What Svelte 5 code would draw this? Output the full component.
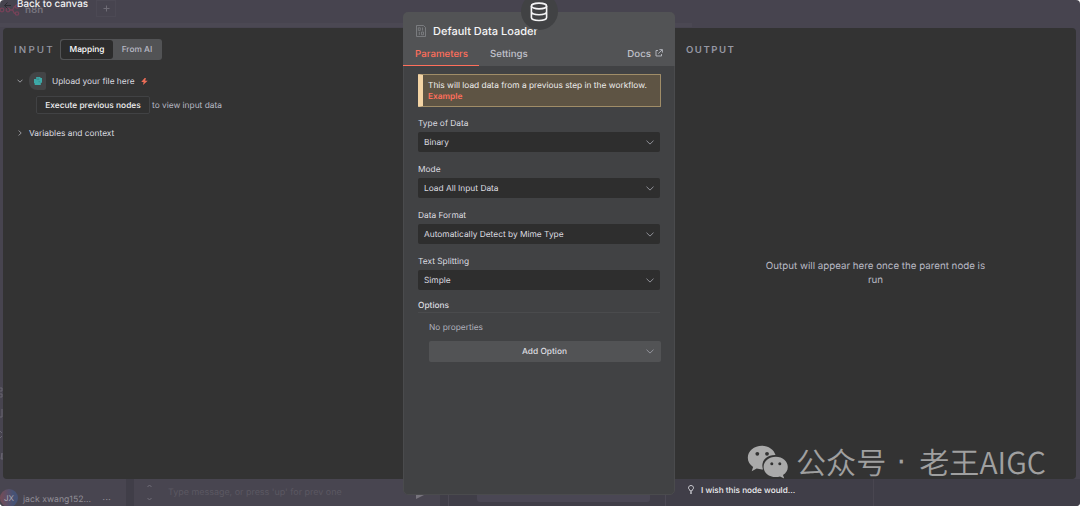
<script>
  const fields = [
    { label: 'Type of Data', value: 'Binary' },
    { label: 'Mode', value: 'Load All Input Data' },
    { label: 'Data Format', value: 'Automatically Detect by Mime Type' },
    { label: 'Text Splitting', value: 'Simple' }
  ];
</script>

{#snippet chevron()}
  <svg class="chevron" viewBox="0 0 8 5" width="8" height="5"><path d="M.5.7 4 4.1 7.500.7" /></svg>
{/snippet}

<div class="screen">
  <div class="app">
    <header class="topbar">
      <div class="brand">
        <svg class="logo" width="20" height="12" viewBox="0 0 20 12"><g fill="none" stroke="#754258" stroke-width="1.3"><circle cx="2" cy="6" r="1.8" /><circle cx="8" cy="6" r="1.8" /><path d="M10 6h2c2 0 1-3.500 3.200-3.500M12 6c2 0 1 3.500 3.200 3.500" /><circle cx="17" cy="2.500" r="1.700" /><circle cx="17" cy="9.500" r="1.700" /></g></svg>
        <span>n8n</span>
      </div>
      <span class="plus"><svg width="7" height="7" viewBox="0 0 7 7"><path d="M3.500.5v6M.5 3.500h6" stroke="#6f6c76" fill="none" /></svg></span>
    </header>
    <footer class="bottombar">
      <div class="user">
        <span class="avatar">JX</span><span class="username">jack xwang152...</span><span class="dots">···</span>
      </div>
      <div class="chat">
        <div class="steps">
          <svg width="5" height="4" viewBox="0 0 5 4"><path d="M.5 3 2.500 1l2 2" /></svg>
          <svg width="5" height="4" viewBox="0 0 5 4"><path d="M.5 1l2 2 2-2" /></svg>
        </div>
        <span class="prompt">Type message, or press 'up' for prev one</span>
        <svg class="send" width="8" height="6" viewBox="0 0 8 6"><path d="M0 1h8L0 5z" fill="#77747d" /></svg>
      </div>
      <div class="log"><div class="logbox"></div></div>
      <div class="rest"></div>
    </footer>
  </div>

  <svg class="rail" width="3" height="84" viewBox="0 0 3 84"><g stroke="#686571" fill="none"><path d="M0 1h2v3H0M0 7h2v3H0M2 22v8H0M0 44l2 2M0 51l2-2M2 66l-1 6h2M2 66v6" /></g></svg>

  <div class="back"><svg width="7" height="7" viewBox="0 0 7 7"><path d="M3.500.5l-3 3 3 3M.7 3.500H7" stroke="#2c2b31" fill="none" /></svg><span>Back to canvas</span></div>

  <main class="dialog">
    <section class="input">
      <div class="inhead">
        <h2>INPUT</h2>
        <div class="toggle"><span class="on">Mapping</span><span class="off">From AI</span></div>
      </div>
      <div class="source">
        <svg class="arrow" width="6" height="4" viewBox="0 0 6 4"><path d="M.5.7 3 3.200 5.500.7" /></svg>
        <span class="nodeicon"><svg width="8" height="8" viewBox="0 0 8 8"><path fill="#3da9a8" d="M2.200 0h4.200v1H8v4.800H6.800V8H.7V6.200H0V2h2.200z" /><path d="M2.500 2.600h2.800M3.300 1.200h2M4.500 4.700h1.800" stroke="#347e80" stroke-width=".6" /></svg></span>
        <span class="sourcename">Upload your file here</span>
        <svg class="bolt" width="7" height="7" viewBox="0 0 7 7"><path fill="#ed6d57" d="M3.700 0 .2 3.900h2.400L2 7l4.700-4.300H4.200L4.900 0z" /></svg>
      </div>
      <div class="execute"><button>Execute previous nodes</button><span>to view input data</span></div>
      <div class="context"><svg class="arrow" width="4" height="6" viewBox="0 0 4 6"><path d="M.7.5 3.200 3 .7 5.500" /></svg><span>Variables and context</span></div>
    </section>

    <section class="node">
      <span class="badge"><svg width="18" height="20" viewBox="0 0 18 20"><g fill="none" stroke="#f4f4f5" stroke-width="1.600"><ellipse cx="9" cy="4" rx="7.600" ry="2.900" /><path d="M1.400 4v11.500c0 1.700 3.400 3 7.600 3s7.600-1.300 7.600-3V4M1.400 9.800c0 1.700 3.400 3 7.600 3s7.600-1.300 7.600-3" /></g></svg></span>
      <header class="nodehead">
        <div class="title">
          <svg width="10" height="12" viewBox="0 0 10 12"><path d="M.5.5h7l2 2v9h-9z" fill="none" stroke="#85878a" stroke-width=".8" /><path d="M2.300 2.800h2v2.600h-2zM6.500 2.500v3.100M3.300 6.800v3.200M5.500 7h2v2.800h-2z" fill="none" stroke="#818386" stroke-width=".8" /></svg>
          <h1>Default Data Loader</h1>
        </div>
        <nav>
          <span class="tab active">Parameters</span><span class="tab settings">Settings</span>
          <span class="docs"><span>Docs</span><svg width="8" height="8" viewBox="0 0 8 8"><path d="M3 1.500H1v5.500h5.500V5M4.400.6h3v3M7.200.8 3.300 4.600" fill="none" stroke="#b9bbc3" stroke-width=".9" /></svg></span>
        </nav>
      </header>
      <div class="params">
        <div class="notice">This will load data from a previous step in the workflow.<br /><b>Example</b></div>
        {#each fields as field}
          <div class="field">
            <span class="label">{field.label}</span>
            <div class="select"><span>{field.value}</span>{@render chevron()}</div>
          </div>
        {/each}
        <div class="options">Options</div>
        <div class="empty">No properties</div>
        <div class="add"><span>Add Option</span>{@render chevron()}</div>
      </div>
    </section>

    <section class="output">
      <h2>OUTPUT</h2>
      <p>Output will appear here once the parent node is<br />run</p>
    </section>
  </main>

  <div class="wish"><svg width="6" height="9" viewBox="0 0 6 9"><path d="M2 6V5C1 4.500.5 3.600.5 2.800.5 1.500 1.600.5 3 .5s2.500 1 2.500 2.300c0 .8-.5 1.700-1.500 2.200v1zM2 7.200h2M2.300 8.500h1.400" fill="none" stroke="#dddde2" stroke-width=".9" /></svg><span>I wish this node would...</span></div>

  <div class="watermark">
    <svg width="42" height="34" viewBox="0 0 42 34">
      <path fill="#aaa" d="M15 .8C7 .8.8 6 .8 12.700c0 3.800 2 7 5.300 9.200l-1.400 4.300 5-2.600c1.700.5 3.400.8 5.300.8h1c-2.800-8 3.500-14.600 12.500-14.300C27 4.800 21.500.8 15 .8z" />
      <path fill="#aaa" d="M28.800 11.700c-6.900 0-12.200 4.500-12.200 10.200S21.900 32 28.800 32c1.500 0 2.900-.2 4.200-.6l4.200 2.200-1.200-3.700c3-1.900 4.800-4.700 4.800-8 0-5.700-5.100-10.200-12-10.200z" />
      <g fill="#333"><circle cx="10.300" cy="8.800" r="1.900" /><circle cx="20" cy="8.800" r="1.900" /><circle cx="24.800" cy="18.700" r="1.500" /><circle cx="32.800" cy="18.700" r="1.500" /></g>
    </svg>
    <span class="account">公众号</span><span class="sep">·</span><span class="name">老王AIGC</span>
  </div>
</div>

<style>
  :global(body) { margin: 0; background: #fff; overflow: hidden; }
  * { box-sizing: border-box; }
  h1, h2, p { margin: 0; font-weight: 400; }
  svg { display: block; flex: none; }
  .screen { position: relative; width: 1080px; height: 506px; overflow: hidden; border-radius: 4px; background: #47444f; font-family: Inter, sans-serif; font-size: 8.350px; color: #dddde0; white-space: nowrap; text-rendering: geometricPrecision; }
  .app { height: 100%; display: flex; flex-direction: column; justify-content: space-between; }
  .topbar { height: 27px; display: flex; width: 692px; border-bottom: 4px solid #4b4853; }
  .brand { display: flex; width: 96px; height: 20px; align-items: center; gap: 5px; font-size: 9.800px; font-weight: 600; color: #77747e; }
  .plus { width: 20px; height: 17px; border: 1px solid #4c4954; display: grid; place-items: center; }
  .bottombar { height: 27px; display: flex; background: #403e48; }
  .user { width: 126px; display: flex; align-items: center; background: #484550; padding-top: 14px; }
  .avatar { width: 18px; height: 18px; border-radius: 50%; background: linear-gradient(90deg, #754c57, #465275 75%); color: #aaa6b0; display: grid; place-items: center; font-size: 8px; flex: none; margin-top: -3px; }
  .username { font-size: 8.700px; color: #918e97; margin-left: 5px; padding-top: 1px; }
  .dots { color: #918e97; margin-left: auto; margin-right: 15px; font-size: 10px; }
  .chat { margin-left: 8px; width: 306px; display: flex; background: #484550; }
  .steps { width: 31px; display: flex; flex-direction: column; gap: 9px; padding: 5px 0 0 13px; }
  .steps path { fill: none; stroke: #716e78; }
  .prompt { color: #5b5862; font-size: 8.950px; line-height: 12px; padding-top: 8px; margin-left: 3px; }
  .send { margin: 15px 0 0 auto; margin-right: 16px; }
  .log { width: 218px; margin-left: 8px; border-left: 1px solid #4c4954; border-right: 1px solid #4c4954; padding-left: 28px; }
  .logbox { height: 23px; width: 173px; background: #4a4754; border-radius: 3px; }
  .rest { width: 208px; border-right: 1px solid #494650; }
  .rail { position: absolute; left: 0; top: 387px; }
  .back { position: absolute; left: 4px; top: 0; display: flex; align-items: center; gap: 6px; font-size: 9.800px; font-weight: 500; line-height: 10px; height: 10px; color: #f3f3f4; }
  .dialog { position: absolute; left: 3px; top: 28px; width: 1073px; height: 451px; border-radius: 4px; background: #333; display: grid; grid-template-columns: 400px 272px 1fr; }
  .input { padding: 11px 0 0 11px; }
  h2 { font-size: 9.600px; font-weight: 600; letter-spacing: 1.500px; color: #9698a3; line-height: 14px; padding-top: 1px; }
  .inhead { display: flex; align-items: center; height: 21px; }
  .inhead h2 { width: 46px; font-size: 9.800px; font-weight: 500; letter-spacing: 2.150px; padding-top: 2px; }
  .toggle { width: 102px; height: 21px; background: #525355; border-radius: 3px; padding: 1px; display: flex; line-height: 20px; text-align: center; }
  .on { width: 52px; height: 19px; background: #2c2c2c; border-radius: 3px; color: #fff; font-weight: 500; }
  .off { flex: 1; color: #b9bac5; font-weight: 500; }
  .source { display: flex; align-items: center; height: 18px; margin-top: 12px; padding-left: 3px; }
  .arrow path { fill: none; stroke: #a6a7ad; stroke-width: .9; }
  .nodeicon { margin-left: 6px; width: 17px; height: 18px; border-radius: 8px 2px 2px 8px; background: #434446; display: grid; place-items: center; }
  .sourcename { margin-left: 6px; padding-top: 2px; }
  .bolt { margin-left: 6px; margin-top: 1px; }
  .execute { display: flex; align-items: center; margin: 6px 0 0 22px; height: 18px; color: #b8b9c4; gap: 2px; }
  .execute span, .context span, .select span, .wish span { padding-top: 2px; }
  button { width: 114px; height: 18px; padding: 2px 0 0; font: 500 8.350px Inter, sans-serif; color: #f1f1f2; background: #303030; border: 1px solid #414244; border-radius: 2px; text-rendering: geometricPrecision; }
  .context { display: flex; align-items: center; margin-top: 12px; height: 14px; padding-left: 4px; gap: 7px; }
  .node { position: relative; margin: -16px 0; height: 483px; background: #414244; border: 1px solid #4a4b4d; border-radius: 5px; }
  .badge { position: absolute; left: 116.500px; top: -20px; width: 37px; height: 37px; border-radius: 50%; background: #414244; display: grid; place-items: center; z-index: 1; }
  .nodehead { margin: -1px -1px 0; height: 54px; background: #525355; border-radius: 5px 5px 0 0; padding-top: 11px; }
  .title { display: flex; align-items: center; height: 15px; padding-left: 13px; gap: 7px; }
  h1 { font-size: 11px; font-weight: 500; color: #f5f5f6; }
  nav { display: flex; height: 28px; font-size: 9.700px; font-weight: 500; color: #c1c2cb; line-height: 34px; }
  .tab.active { width: 76px; color: #ff6f5c; border-bottom: 1px solid #ff6f5c; padding-left: 12px; }
  .settings { margin-left: 11px; }
  .docs { margin-left: auto; padding-right: 12px; display: flex; align-items: center; gap: 4px; height: 29px; }
  .docs span { padding-top: 4px; }
  .params { padding: 8px 14px 0; }
  .notice { height: 33px; margin-right: -1px; border: 1px solid #a08d68; border-left: 5px solid #f3d4a5; border-radius: 1px; background: #5e5444; padding: 6px 0 0 5px; line-height: 10.500px; color: #eee; }
  .notice b { color: #ff6f5c; font-weight: 600; }
  .field { height: 46px; padding-top: 10px; }
  .field:nth-child(5) { height: 45px; }
  .label { display: block; line-height: 14px; margin-bottom: 1px; }
  .select { height: 20px; background: #2e2e2e; border-radius: 2px; display: flex; align-items: center; justify-content: space-between; padding: 0 6px; }
  .chevron path { fill: none; stroke: #9b9ca4; stroke-width: .9; }
  .options { margin-top: 8px; height: 15px; line-height: 16px; border-bottom: 1px solid #4a4b4d; font-weight: 500; }
  .empty { margin: 8px 0 0 11px; line-height: 14px; color: #b0b1bc; }
  .add { margin: 6px -1px 0 11px; height: 21px; background: #525355; border-radius: 2px; display: flex; align-items: center; padding: 0 7px 0 14px; font-weight: 500; }
  .add span { flex: 1; text-align: center; padding-top: 1px; }
  .output { padding: 15px 0 0 11px; display: flex; flex-direction: column; }
  .output p { margin: 202px 0 0 -11px; text-align: center; font-size: 9.750px; line-height: 13.500px; color: #b8b9c4; }
  .wish { position: absolute; left: 688px; top: 483px; display: flex; align-items: center; gap: 7px; height: 12px; font-size: 8.200px; font-weight: 500; color: #f0f0f2; }
  .watermark { position: absolute; left: 747px; top: 445px; display: flex; align-items: flex-start; color: #a0a0a0; font-family: "Noto Sans CJK SC", sans-serif; font-size: 30.100px; font-weight: 350; line-height: 33px; }
  .account { margin-left: 7px; }
  .sep { width: 30px; text-align: center; font-family: "DejaVu Sans", sans-serif; font-weight: 400; line-height: 35px; }
  .name { margin-left: 3px; }
</style>
